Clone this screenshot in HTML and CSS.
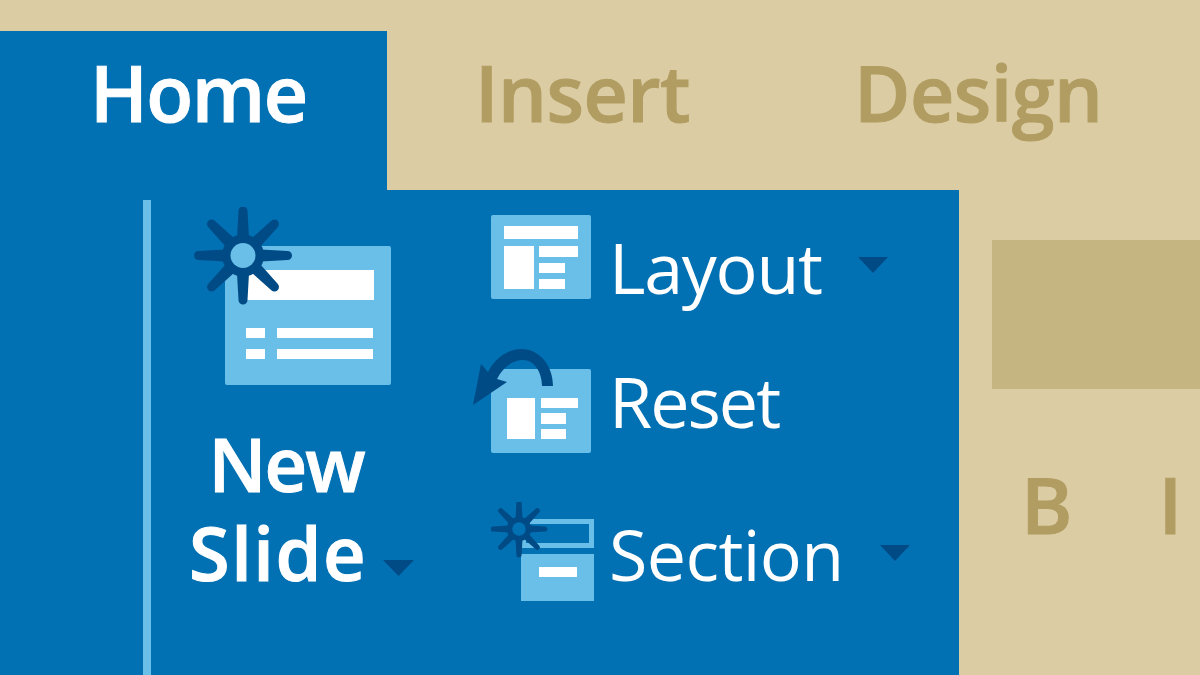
FILE: index.html
```html
<!DOCTYPE html>
<html>
<head>
<meta charset="utf-8" />
<title>Home ribbon</title>
<link rel="stylesheet" href="styles.css">
</head>
<body>
<div id="page">
    <!-- tabs -->
    <div id="tabs">
        <div class="tab tab-home">Home</div>
        <div class="tab tab-insert">Insert</div>
        <div class="tab tab-design">Design</div>
    </div>
    <div id="main">
        <div id="ribbon">
            <div class="rule"></div>
            <div class="new-slide">
                <svg class="icon-new" viewBox="194 207 197 178">
                    <defs>
                        <path id="ray" d="M-6 -18L-4.5 -44.5A4.5 4.5 0 0 1 4.5 -44.5L6 -18Z"/>
                    </defs>
                    <rect x="225" y="246" width="166" height="139" rx="2" fill="#69bfe8"/>
                    <rect x="246" y="270" width="128" height="30" fill="#fff"/>
                    <rect x="246" y="328" width="19" height="10" fill="#fff"/>
                    <rect x="277" y="328" width="96" height="10" fill="#fff"/>
                    <rect x="246" y="349" width="19" height="10" fill="#fff"/>
                    <rect x="277" y="349" width="96" height="10" fill="#fff"/>
                    <g fill="#004b85" transform="translate(243 255.5)">
                        <use href="#ray"/>
                        <use href="#ray" transform="rotate(45)"/>
                        <use href="#ray" transform="rotate(90)"/>
                        <use href="#ray" transform="rotate(135)"/>
                        <use href="#ray" transform="rotate(180)"/>
                        <use href="#ray" transform="rotate(225)"/>
                        <use href="#ray" transform="rotate(270)"/>
                        <use href="#ray" transform="rotate(315)"/>
                        <circle r="21"/>
                        <circle r="12.5" fill="#69bfe8"/>
                    </g>
                </svg>
                <div class="new-label new-word">New</div>
                <div class="slide-line">
                    <span class="new-label slide-word">Slide</span>
                    <svg class="caret caret-slide" viewBox="0 0 30 16" preserveAspectRatio="none"><path d="M0 0H30L15 16Z"/></svg>
                </div>
            </div>
            <div class="commands">
                <div class="cmd cmd-layout">
                    <div class="cmd-icon">
                        <svg class="icon-layout" viewBox="491 215 100 84">
                            <rect x="491" y="215" width="100" height="84" rx="2" fill="#69bfe8"/>
                            <rect x="504" y="226" width="74" height="13" fill="#fff"/>
                            <rect x="504" y="246" width="30" height="43" fill="#fff"/>
                            <rect x="539" y="246" width="39" height="11" fill="#fff"/>
                            <rect x="539" y="263" width="26" height="10" fill="#fff"/>
                            <rect x="539" y="279" width="26" height="10" fill="#fff"/>
                        </svg>
                    </div>
                    <span class="cmd-label">Layout</span>
                    <svg class="caret caret-layout" viewBox="0 0 30 16"><path d="M0 0H30L15 16Z"/></svg>
                </div>
                <div class="cmd cmd-reset">
                    <div class="cmd-icon">
                        <svg class="icon-reset" viewBox="473 349 118 104">
                            <rect x="491" y="369" width="100" height="84" rx="2" fill="#69bfe8"/>
                            <rect x="507" y="398" width="28" height="41" fill="#fff"/>
                            <rect x="541" y="398" width="37" height="10" fill="#fff"/>
                            <rect x="541" y="413" width="25" height="11" fill="#fff"/>
                            <rect x="541" y="429" width="25" height="10" fill="#fff"/>
                            <path d="M553 386C553 364 538 349 522 349C508 349 495 358 488 372L481 364L473 405L507 382L497 379C503 367 513 360 523 360C534 360 542 372 542 386Z" fill="#004b85"/>
                        </svg>
                    </div>
                    <span class="cmd-label">Reset</span>
                </div>
                <div class="cmd cmd-section">
                    <div class="cmd-icon">
                        <svg class="icon-section" viewBox="491 502 103 99">
                            <rect x="523.5" y="521.5" width="68" height="24" fill="none" stroke="#69bfe8" stroke-width="5"/>
                            <rect x="521" y="554" width="73" height="47" fill="#69bfe8"/>
                            <rect x="539" y="567" width="38" height="10" fill="#fff"/>
                            <g fill="#004b85" transform="translate(519 529) scale(0.58)">
                                <use href="#ray"/>
                                <use href="#ray" transform="rotate(45)"/>
                                <use href="#ray" transform="rotate(90)"/>
                                <use href="#ray" transform="rotate(135)"/>
                                <use href="#ray" transform="rotate(180)"/>
                                <use href="#ray" transform="rotate(225)"/>
                                <use href="#ray" transform="rotate(270)"/>
                                <use href="#ray" transform="rotate(315)"/>
                                <circle r="21"/>
                                <circle r="11.5" fill="#0271b3"/>
                            </g>
                        </svg>
                    </div>
                    <span class="cmd-label">Section</span>
                    <svg class="caret caret-section" viewBox="0 0 30 16"><path d="M0 0H30L15 16Z"/></svg>
                </div>
            </div>
        </div>
        <div id="side">
            <div class="swatch"></div>
            <div class="format">
                <span>B</span>
                <span>I</span>
            </div>
        </div>
    </div>
</div>
</body>
</html>
```

FILE: styles.css
```css
html, body {
    margin: 0;
    padding: 0;
}
#page {
    width: 1200px;
    height: 675px;
    overflow: hidden;
    padding-top: 31px;
    box-sizing: border-box;
    background-color: #dbcca3;
    font-family: "Open Sans", sans-serif;
}
#tabs {
    display: flex;
    height: 159px;
}
.tab {
    font-size: 77px;
    font-weight: 600;
    line-height: 124px;
    -webkit-text-stroke: 1px;
    color: #b19d62;
}
.tab-home {
    width: 297px;
    padding-left: 90px;
    letter-spacing: -1.5px;
    background-color: #0271b3;
    color: #fff;
}
.tab-insert {
    margin-left: 88px;
    letter-spacing: -0.5px;
}
.tab-design {
    margin-left: 164px;
    letter-spacing: -0.5px;
}
#main {
    display: flex;
    height: 485px;
}
#ribbon {
    display: flex;
    width: 959px;
    padding-left: 143px;
    box-sizing: border-box;
    background-color: #0271b3;
}
.rule {
    width: 8px;
    margin-top: 10px;
    background-color: #69bfe8;
}
.new-slide {
    width: 279px;
    margin-left: 43px;
    padding-top: 17px;
    box-sizing: border-box;
}
.icon-new {
    display: block;
    width: 197px;
    height: 178px;
}
.new-label {
    font-size: 74px;
    font-weight: 600;
    line-height: 89px;
    -webkit-text-stroke: 1px;
    color: #fff;
    text-align: center;
    width: 166px;
}
.new-word {
    margin-top: 34px;
    padding-left: 9px;
    letter-spacing: -2px;
}
.slide-word {
    width: auto;
    margin-left: -5px;
    letter-spacing: 1.5px;
}
.slide-line {
    display: flex;
    align-items: flex-start;
}
.caret {
    display: block;
    width: 30px;
    height: 16px;
    fill: #004b85;
}
.caret-slide {
    width: 31px;
    margin-top: 52px;
    margin-left: 16px;
}
.commands {
    padding-top: 25px;
}
.cmd {
    display: flex;
    align-items: flex-start;
}
.cmd-layout {
    height: 84px;
}
.cmd-reset {
    height: 104px;
    margin-top: 50px;
}
.cmd-section {
    height: 99px;
    margin-top: 49px;
}
.cmd-icon {
    display: flex;
    justify-content: flex-end;
    width: 124px;
    flex: none;
}
.cmd-section .cmd-icon {
    justify-content: flex-start;
    padding-left: 18px;
    box-sizing: border-box;
}
.cmd-icon svg {
    display: block;
}
.icon-layout {
    width: 100px;
    height: 84px;
    margin-right: 6px;
}
.icon-reset {
    width: 118px;
    height: 104px;
    margin-right: 6px;
}
.icon-section {
    width: 103px;
    height: 99px;
}
.cmd-label {
    margin-left: 12px;
    font-size: 70px;
    line-height: 88px;
    color: #fff;
}
.cmd-layout .cmd-label {
    margin-top: 8px;
    letter-spacing: -1.3px;
}
.cmd-reset .cmd-label {
    margin-top: 8px;
    letter-spacing: -2px;
}
.cmd-section .cmd-label {
    margin-top: 8px;
    letter-spacing: -0.6px;
}
.caret-layout {
    margin-top: 42px;
    margin-left: 36px;
}
.caret-section {
    margin-top: 43px;
    margin-left: 36px;
}
#side {
    flex: 1;
    padding-top: 50px;
    padding-left: 33px;
}
.swatch {
    height: 149px;
    background-color: #c5b581;
}
.format {
    display: flex;
    margin-top: 71px;
    padding-left: 29px;
    font-size: 78px;
    font-weight: 600;
    line-height: 88px;
    -webkit-text-stroke: 1px;
    color: #b19d62;
}
.format span + span {
    margin-left: 86px;
}
```
